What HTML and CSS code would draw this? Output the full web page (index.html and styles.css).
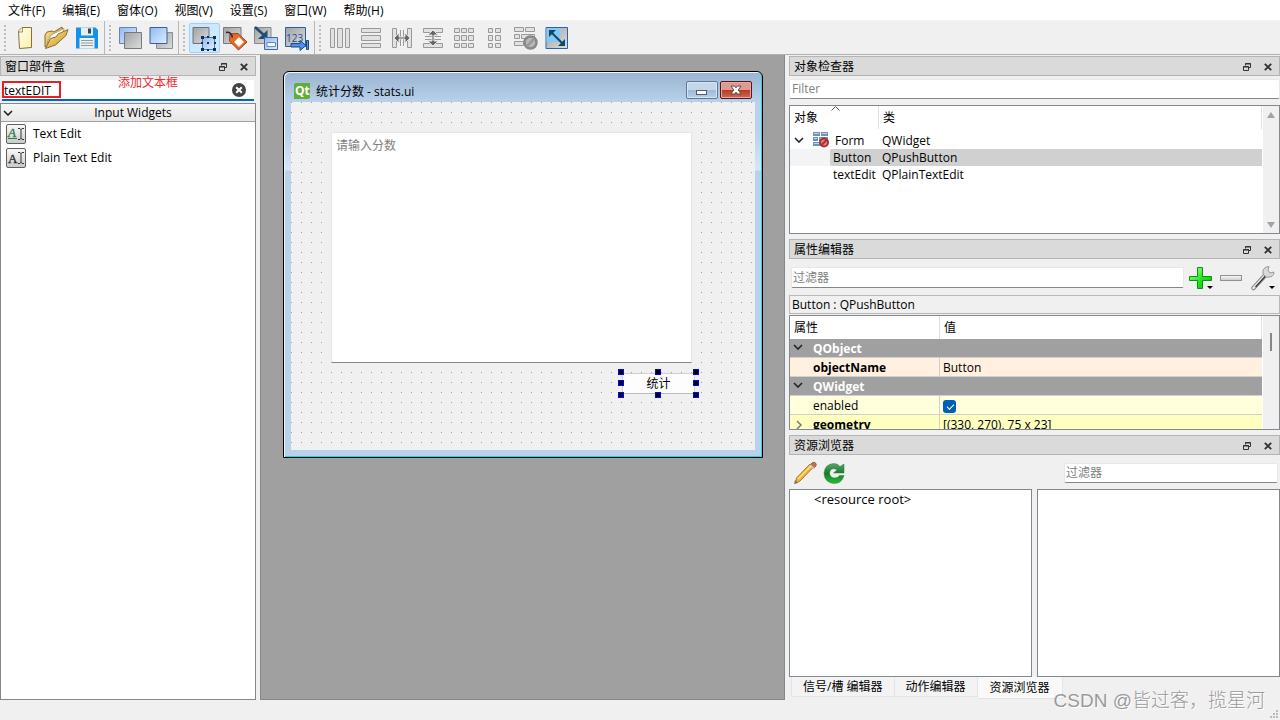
FILE: index.html
```html
<!DOCTYPE html>
<html lang="zh-CN">
<head>
<meta charset="utf-8">
<title>Qt Designer</title>
<link rel="stylesheet" href="styles.css">
</head>
<body>
<svg class="defs" aria-hidden="true">
  <defs>
    <linearGradient id="grey" x1="0" y1="0" x2="1" y2="1"><stop offset="0" stop-color="#9fa2a5"/><stop offset="1" stop-color="#dcdddd"/></linearGradient>
    <linearGradient id="blue" x1="0" y1="0" x2="1" y2="1"><stop offset="0" stop-color="#8db8f5"/><stop offset="1" stop-color="#e2eefc"/></linearGradient>
    <linearGradient id="gold" x1="0" y1="0" x2="1" y2="1"><stop offset="0" stop-color="#ffeaa0"/><stop offset="1" stop-color="#c58c1c"/></linearGradient>
    <linearGradient id="page" x1="0" y1="0" x2="1" y2="1"><stop offset="0" stop-color="#fffef0"/><stop offset="1" stop-color="#fff0a8"/></linearGradient>
    <linearGradient id="green" x1="0" y1="0" x2="0" y2="1"><stop offset="0" stop-color="#5aa569"/><stop offset=".5" stop-color="#177a2a"/><stop offset="1" stop-color="#27c22c"/></linearGradient>
    <linearGradient id="lime" x1="0" y1="0" x2="1" y2="1"><stop offset="0" stop-color="#b9ffb0"/><stop offset=".55" stop-color="#22e222"/><stop offset="1" stop-color="#06bd08"/></linearGradient>
    <linearGradient id="steel" x1="0" y1="0" x2="0" y2="1"><stop offset="0" stop-color="#fafafa"/><stop offset="1" stop-color="#c9c9c9"/></linearGradient>
    <symbol id="restore" viewBox="0 0 8 8"><path d="M2.500 2.500V.5h5v4h-2M2 1h6" fill="none" stroke="#333"/><path d="M.5 3.500h5v4h-5zM0 4h6" fill="none" stroke="#333"/></symbol>
    <symbol id="close" viewBox="0 0 8 8"><path d="M.8.8l6.400 6.400M7.200.8L.8 7.200" stroke="#333" stroke-width="1.900"/></symbol>
    <symbol id="chevron" viewBox="0 0 10 6"><path d="M1 1l4 4 4-4" fill="none" stroke="#222" stroke-width="1.600"/></symbol>
  </defs>
</svg>

<div class="app">
  <nav class="menubar">
    <button>文件(F)</button><button>编辑(E)</button><button>窗体(O)</button><button>视图(V)</button><button>设置(S)</button><button>窗口(W)</button><button>帮助(H)</button>
  </nav>

  <div class="toolbars">
    <div class="toolbar">
      <i class="grip"></i>
      <button aria-label="新建"><svg viewBox="0 0 24 24"><path d="M5.500 5L9 1.500h9.500v20l-12 1z" fill="url(#page)" stroke="#8a7138"/><path d="M5.500 6H9.500V1.500" fill="#fff6c8" stroke="#a48b50"/></svg></button>
      <button aria-label="打开"><svg viewBox="0 0 24 24"><path d="M1 21V9l2-3 5-1 2 1 8-5 1 4-5 12z" fill="url(#gold)" stroke="#8b6b2c"/><path d="M3 17l4-8L20 2.500 19 8z" fill="#fff" stroke="#9b8550" stroke-width=".7"/><path d="M1.500 22.500l5-10 5.500-1.500 2-3 10-4.500-2 6L11.500 19z" fill="url(#gold)" stroke="#92702c"/></svg></button>
      <button aria-label="保存"><svg viewBox="0 0 24 24"><path d="M1 1.500h19.500L23 4v18.500H1z" fill="#1391ee"/><path d="M6 1.500h12v8H6z" fill="#e7ecee"/><path d="M13 2.500h3v5h-3z" fill="#344854"/><path d="M4.500 12h15v10.500h-15z" fill="#eef0f0"/><path d="M6 14.500h12M6 17h12M6 19.500h12" stroke="#939a9c"/></svg></button>
    </div>
    <div class="toolbar">
      <i class="grip"></i>
      <button aria-label="置后"><svg viewBox="0 0 24 24"><path d="M1.500 1.500h17v16h-17z" fill="url(#blue)" stroke="#6c83a5"/><path d="M6.500 6.500h17v16h-17z" fill="url(#grey)" stroke="#77797c"/></svg></button>
      <button aria-label="置前"><svg viewBox="0 0 24 24"><path d="M7.500 6.500h16v16h-16z" fill="url(#grey)" stroke="#8b8d90"/><path d="M1 1.500h17v16H1z" fill="url(#blue)" stroke="#3e5f91"/></svg></button>
    </div>
    <div class="toolbar">
      <i class="grip"></i>
      <button class="on" aria-label="编辑控件"><svg viewBox="0 0 24 24"><path d="M1 1.500h16v16H1z" fill="url(#grey)" stroke="#707274"/><path d="M10.500 11.500h12v12h-12z" fill="url(#blue)" stroke="#4a77b4"/><g fill="#102d54"><path d="M9 10h3v3H9zM15 10h2v2h-2zM21 10h3v3h-3zM9 16h2v2H9zM22 16h2v2h-2zM9 22h3v3H9zM15 23h2v2h-2zM21 22h3v3h-3zM15 16h2v2h-2z"/></g></svg></button>
      <button aria-label="编辑伙伴"><svg viewBox="0 0 24 24"><path d="M.5 1.500H18v16H.5z" fill="url(#grey)" stroke="#77797b"/><path d="M7 8l8-.5 9 8.500-8.500 8L6.500 15z" fill="#e96b25" stroke="#9c3d12"/><path d="M16 11l5 5-5 5-5-5z" fill="#fff" stroke="#f8a46e"/><path d="M3 6.500q5-1 6.500 5" fill="none" stroke="#222c38" stroke-width="1.500"/></svg></button>
      <button aria-label="编辑信号/槽"><svg viewBox="0 0 24 24"><path d="M.5 1.500H17v16H.5z" fill="url(#grey)" stroke="#86888a"/><path d="M1 1l10 9" stroke="#244d75" stroke-width="2.500"/><path d="M13.500 4v9H4z" fill="#244d75"/><path d="M10.500 11.500h13v12h-13z" fill="url(#blue)" stroke="#3c6aa8"/><path d="M13 16.500h8.500v4H13z" fill="#fff" stroke="#6488bb"/></svg></button>
      <button aria-label="编辑Tab顺序"><svg viewBox="0 0 24 24"><path d="M.5 1.500h20v19H.5z" fill="url(#grey)" stroke="#2d609b"/><text x="1" y="16" class="tabnum">123</text><path d="M6 17.500h9v-3l6 5-6 5v-3.500H6z" fill="#4d91e4" stroke="#194a8a"/><path d="M21.500 14.500h2v9h-2z" fill="#5a93d8" stroke="#194a8a"/></svg></button>
    </div>
    <div class="toolbar last">
      <i class="grip"></i>
      <button aria-label="水平布局"><svg viewBox="0 0 24 24" class="lay"><path d="M2.500 2.500h4v19h-4zM9.500 2.500h5v19h-5zM17.500 2.500h4v19h-4z"/></svg></button>
      <button aria-label="垂直布局"><svg viewBox="0 0 24 24" class="lay"><path d="M2.500 2.500h19v4h-19zM2.500 9.500h19v5h-19zM2.500 17.500h19v4h-19z"/></svg></button>
      <button aria-label="使用分裂器水平布局"><svg viewBox="0 0 24 24" class="lay"><path d="M2.500 2.500h4v19h-4zM17.500 2.500h4v19h-4z"/><path d="M10.500 4v16M13.500 4v16" /><path class="dark" d="M4 12l5-5v4h6V7l5 5-5 5v-4H9v4z"/></svg></button>
      <button aria-label="使用分裂器垂直布局"><svg viewBox="0 0 24 24" class="lay"><path d="M2.500 2.500h19v4h-19zM2.500 17.500h19v4h-19z"/><path d="M4 10.500h16M4 13.500h16"/><path class="dark" d="M12 4l5 5h-4v6h4l-5 5-5-5h4V9H7z"/></svg></button>
      <button aria-label="栅格布局"><svg viewBox="0 0 24 24" class="lay"><path d="M2.500 2.500h5v4h-5zM9.500 2.500h5v4h-5zM16.500 2.500h5v4h-5zM2.500 9.500h5v5h-5zM9.500 9.500h5v5h-5zM16.500 9.500h5v5h-5zM2.500 17.500h5v4h-5zM9.500 17.500h5v4h-5zM16.500 17.500h5v4h-5z"/></svg></button>
      <button aria-label="表单布局"><svg viewBox="0 0 24 24" class="lay"><path d="M5.500 2.500h4v4h-4zM12.500 2.500h5v4h-5zM5.500 9.500h4v5h-4zM12.500 9.500h5v5h-5zM5.500 17.500h4v4h-4zM12.500 17.500h5v4h-5z"/></svg></button>
      <button aria-label="打破布局"><svg viewBox="0 0 24 24" class="lay"><path d="M.5 1.500h9v4h-9zM11.500 1.500h9v4h-9zM.5 8.500h5v4h-5zM7.500 8.500h13v4h-13zM.5 15.500h9v4h-9z"/><circle cx="16.500" cy="16.500" r="6" fill="#b8b8b8" stroke="#888" stroke-width="2.500"/><path d="M12.500 20.500l8-8" stroke="#888" stroke-width="2.500"/></svg></button>
      <button aria-label="调整大小"><svg viewBox="0 0 24 24"><path d="M1 1.500h21.500v21H1z" fill="#b9c9d2" stroke="#2864ae"/><path d="M1.500 2h14v14h-14z" fill="#86c8f5"/><path d="M16 2h6v20H2v-6h14z" fill="url(#grey)"/><path d="M5 5l14 14" stroke="#114766" stroke-width="2"/><path d="M4 4h7l-7 7zM20 20h-7l7-7z" fill="#114766"/></svg></button>
    </div>
  </div>

  <main class="workspace">
    <aside class="dock left">
      <header class="dock-title"><h2>窗口部件盒</h2><button aria-label="浮动"><svg><use href="#restore"/></svg></button><button aria-label="关闭"><svg><use href="#close"/></svg></button></header>
      <div class="search">
        <input type="text" value="textEDIT" aria-label="过滤部件">
        <button aria-label="清除"><svg viewBox="0 0 14 14"><circle cx="7" cy="7" r="7" fill="#444"/><path d="M4.200 4.200l5.600 5.600M9.800 4.200L4.200 9.800" stroke="#fff" stroke-width="2"/></svg></button>
        <span class="mark"></span><span class="note">添加文本框</span>
      </div>
      <div class="widget-box">
        <button class="category"><svg><use href="#chevron"/></svg><span>Input Widgets</span></button>
        <ul>
          <li><svg viewBox="0 0 20 20"><rect x=".5" y=".5" width="19" height="19" rx="1.500" fill="url(#steel)" stroke="#606060"/><text x="2" y="13" class="ai rich">A</text><path d="M2 14.500h9" stroke="#2d7a45"/><path d="M12 4.500h2l1 1 1-1h2M15 5v10M12 15.500h2l1-1 1 1h2" fill="none" stroke="#333"/></svg><span>Text Edit</span></li>
          <li><svg viewBox="0 0 20 20"><rect x=".5" y=".5" width="19" height="19" rx="1.500" fill="url(#steel)" stroke="#606060"/><text x="2" y="15" class="ai">A</text><path d="M12 4.500h2l1 1 1-1h2M15 5v10M12 15.500h2l1-1 1 1h2" fill="none" stroke="#333"/></svg><span>Plain Text Edit</span></li>
        </ul>
      </div>
    </aside>

    <section class="canvas">
      <div class="form-window">
        <header class="form-title">
          <svg class="qt" viewBox="0 0 16 16"><path d="M1.500 0H16v14.500L14.500 16H0V1.500z" fill="#5fae35"/><text x="1" y="12">Qt</text></svg>
          <h1>统计分数 - stats.ui</h1>
          <button class="min" aria-label="最小化"><svg viewBox="0 0 12 10"><rect x=".5" y="5.500" width="10" height="4" fill="#fff" stroke="#555d66"/></svg></button>
          <button class="shut" aria-label="关闭"><svg viewBox="0 0 12 10"><path d="M1 1h3.500L6 2.800 7.500 1H11L8.300 5 11 9H7.500L6 7.200 4.500 9H1l2.700-4z" fill="#fff" stroke="#5a4a4e"/></svg></button>
        </header>
        <div class="form">
          <textarea class="score" placeholder="请输入分数" aria-label="分数"></textarea>
          <div class="pick">
            <button>统计</button>
            <i class="n w"></i><i class="n c"></i><i class="n e"></i><i class="m w"></i><i class="m e"></i><i class="s w"></i><i class="s c"></i><i class="s e"></i>
          </div>
        </div>
      </div>
    </section>

    <aside class="dock right">
      <section class="inspector">
        <header class="dock-title"><h2>对象检查器</h2><button aria-label="浮动"><svg><use href="#restore"/></svg></button><button aria-label="关闭"><svg><use href="#close"/></svg></button></header>
        <input class="line" type="text" placeholder="Filter" aria-label="Filter">
        <div class="view tree">
          <table>
            <thead><tr><th>对象<svg class="sort" viewBox="0 0 9 5"><path d="M.5 4.500l4-4 4 4" fill="none" stroke="#555"/></svg></th><th>类</th></tr></thead>
            <tbody>
              <tr class="root"><td><span class="node"><svg class="arrow"><use href="#chevron"/></svg><svg class="kind" viewBox="0 0 16 16"><path d="M0 0h7v4H0zM8 0h7v4H8zM0 5h5v4H0zM6 5h9v4H6zM0 10h7v4H0z" fill="#6f94b4"/><path d="M1 1h5v1H1zM9 1h5v1H9zM1 6h3v1H1zM7 6h7v1H7zM1 11h5v1H1z" fill="#b5d8f2"/><circle cx="11" cy="10.500" r="4" fill="#d98a8a" stroke="#ad2d32" stroke-width="2"/><path d="M8.500 13l5-5" stroke="#ad2d32" stroke-width="2"/></svg>Form</span></td><td>QWidget</td></tr>
              <tr class="sel"><td><span class="leaf">Button</span></td><td>QPushButton</td></tr>
              <tr><td><span class="leaf">textEdit</span></td><td>QPlainTextEdit</td></tr>
            </tbody>
          </table>
          <div class="scroll"><i class="up"></i><i class="down"></i></div>
        </div>
      </section>

      <section class="properties">
        <header class="dock-title"><h2>属性编辑器</h2><button aria-label="浮动"><svg><use href="#restore"/></svg></button><button aria-label="关闭"><svg><use href="#close"/></svg></button></header>
        <div class="tools">
          <input class="line" type="text" placeholder="过滤器" aria-label="过滤属性">
          <button aria-label="添加动态属性"><svg viewBox="0 0 26 26"><path d="M8.500 2.500h5v9h9v4h-9v8h-5v-8h-8v-4h8z" fill="url(#lime)" stroke="#0b930f"/><path d="M18 21h6l-3 3z" fill="#000"/></svg></button>
          <button aria-label="删除动态属性"><svg viewBox="0 0 26 26"><rect x=".5" y="10.500" width="21" height="5" fill="url(#steel)" stroke="#929292"/></svg></button>
          <button aria-label="配置"><svg viewBox="0 0 26 26"><path d="M2.500 23L14 10.500" stroke="#8a8a8a" stroke-width="4.500" stroke-linecap="round"/><path d="M2.500 23L14 10.500" stroke="#e9e9e9" stroke-width="2.500" stroke-linecap="round"/><path d="M4.500 22L15 10.500" stroke="#333" stroke-width="1.200"/><path d="M12 9q-1-7 6-7.500l-1 3.500 2 3 4-1q0 6-8 5z" fill="#d8d8d8" stroke="#999"/><path d="M18 21h6l-3 3z" fill="#000"/></svg></button>
        </div>
        <p class="target">Button : QPushButton</p>
        <div class="view props">
          <table>
            <thead><tr><th>属性</th><th>值</th></tr></thead>
            <tbody>
              <tr class="group"><td colspan="2"><svg><use href="#chevron"/></svg>QObject</td></tr>
              <tr class="peach"><td><b>objectName</b></td><td>Button</td></tr>
              <tr class="group"><td colspan="2"><svg><use href="#chevron"/></svg>QWidget</td></tr>
              <tr class="pale"><td><label for="enabled">enabled</label></td><td><input type="checkbox" id="enabled" checked></td></tr>
              <tr class="yellow"><td><svg class="closed" viewBox="0 0 6 10"><path d="M1 1l4 4-4 4" fill="none" stroke="#777" stroke-width="1.500"/></svg><b>geometry</b></td><td>[(330, 270), 75 x 23]</td></tr>
            </tbody>
          </table>
          <div class="scroll"><i class="thumb"></i></div>
        </div>
      </section>

      <section class="resources">
        <header class="dock-title"><h2>资源浏览器</h2><button aria-label="浮动"><svg><use href="#restore"/></svg></button><button aria-label="关闭"><svg><use href="#close"/></svg></button></header>
        <div class="tools">
          <button aria-label="编辑资源"><svg viewBox="0 0 24 24"><path d="M2.500 22.500l1-5.500L17 3l3.500 3L7 20z" fill="#f3b23c" stroke="#b5771e"/><path d="M5 18L18 5" stroke="#ffe08b" stroke-width="1.500"/><path d="M17 4l2-2q2-1.500 3.500 0t0 3.500L20.500 7z" fill="#c56d55" stroke="#9b5c4a"/><path d="M17 4l3.500 3" stroke="#ccd3d8" stroke-width="1.500"/><path d="M1 23l1-4 3 2.500z" fill="#807668"/></svg></button>
          <button aria-label="重新加载"><svg viewBox="0 0 24 24"><path d="M18 5.500L22 3v9H11.500l3.800-3.300Q8.500 5.500 7.500 12q.5 5 5.500 5 3.500-.3 4.500-2.500H22Q20 22.500 12 22.500 2.500 21.500 2 12.500 2.500 3 12 2.500q4 .2 6 3z" fill="url(#green)" stroke="#27813a" stroke-width=".5"/></svg></button>
          <input class="line" type="text" placeholder="过滤器" aria-label="过滤资源">
        </div>
        <div class="panes"><div class="view root-list"><p>&lt;resource root&gt;</p></div><div class="view"></div></div>
      </section>
      <nav class="tabs"><button>信号/槽 编辑器</button><button>动作编辑器</button><button class="active">资源浏览器</button></nav>
    </aside>
  </main>
  <footer class="status"></footer>
  <span class="watermark">CSDN @皆过客，揽星河</span>
  <svg class="sizer" viewBox="0 0 10 10"><path d="M6 0h2v2H6zM3 3h2v2H3zM6 3h2v2H6zM0 6h2v2H0zM3 6h2v2H3zM6 6h2v2H6z" fill="#bbb"/></svg>
</div>
</body>
</html>
```
FILE: styles.css
```css
* { box-sizing: border-box; }
body, h1, h2, p, ul { margin: 0; padding: 0; }
body, button, input, textarea {
  font-family: "Open Sans", "Noto Sans CJK SC", sans-serif;
  font-size: 12px;
  line-height: 16px;
  color: #000;
}
body { background: #f0f0f0; }
h1, h2 { font-size: 12px; font-weight: normal; }
button { border: 0; padding: 0; background: none; white-space: nowrap; }
input, textarea { border: 0; padding: 0; outline: 0; border-radius: 0; min-width: 0; }
svg { display: block; flex: none; }
ul { list-style: none; }
::placeholder { color: #808080; opacity: 1; }
.defs { position: absolute; width: 0; height: 0; }

.app { position: relative; display: flex; flex-direction: column; height: 100vh; overflow: hidden; }

.menubar { display: flex; gap: 17px; height: 21px; padding: 2px 8px 0; background: #fff; border-bottom: 1px solid #f4f4f4; }

.toolbars { display: flex; height: 34px; border-bottom: 1px solid #b0b0b0; flex: none; }
.toolbar { display: flex; padding: 2px 1px 1px 0; border-right: 1px solid #b8b8b8; }
.toolbar.last { border-right: 0; }
.grip { width: 10px; margin: 2px 0; background: repeating-linear-gradient(#bdbdbd 0 2px, transparent 2px 4px) 4px 0 / 2px 26px no-repeat; }
.toolbar button { display: grid; place-items: center; width: 31px; height: 30px; padding-right: 1px; }
.toolbar button svg { width: 24px; height: 24px; overflow: visible; }
.toolbar .on { background: #cce8ff; border: 1px solid #99d1ff; border-radius: 2px; }
.tabnum { font: 10px "Open Sans", sans-serif; fill: #1c4f8d; }
.lay path { fill: #e2e2e2; stroke: #999; }
.lay .dark { fill: #666; stroke: #e0e0e0; }

.workspace { flex: 1; min-height: 0; display: flex; gap: 4px; }
.dock { display: flex; flex-direction: column; flex: none; padding-top: 1px; }
.left { width: 256px; }
.right { width: 491px; }
.dock-title { display: flex; align-items: center; height: 20px; flex: none; padding: 2px 4px 0; background: #dadada; border: 1px solid #b4b4b4; }
.dock-title h2 { flex: 1; }
.dock-title button { width: 14px; height: 14px; margin-left: 7px; display: grid; place-items: center; }
.dock-title svg { width: 8px; height: 8px; }

.search { position: relative; display: flex; align-items: center; height: 21px; margin: 4px 2px 2px; padding: 0 8px 0 2px; background: #fff; border-bottom: 2px solid #0067c0; flex: none; }
.search input { flex: 1; padding-top: 2px; background: none; }
.search svg { width: 14px; height: 14px; }
.mark { position: absolute; left: 0; top: 1px; width: 59px; height: 17px; border: 2px solid #e81e25; }
.note { position: absolute; left: 116px; top: -5px; color: #ee2a31; }
.widget-box { flex: 1; border: 1px solid #828790; background: #fff; }
.category { display: flex; align-items: center; width: 100%; height: 18px; padding: 1px 2px 0; background: linear-gradient(#f6f6f6, #e6e6e6); border-bottom: 1px solid #a0a0a0; }
.category svg { width: 10px; height: 6px; }
.category span { flex: 1; text-align: center; }
.widget-box li { display: flex; align-items: center; gap: 7px; height: 24px; padding-left: 5px; }
.widget-box li svg { width: 20px; height: 20px; }
.ai { font: 13px "Liberation Serif", serif; fill: #222; stroke: #222; stroke-width: .3px; }
.ai.rich { font-style: italic; fill: #2d7a45; stroke: #2d7a45; }

.canvas { position: relative; flex: 1; min-width: 0; background: #a0a0a0; border: 1px solid #828790; border-top: 0; }
.form-window { position: absolute; left: 22px; top: 16px; width: 480px; height: 387px; display: flex; flex-direction: column; padding: 1px 7px 7px; background: linear-gradient(#99b4d1, #b9d1ea 30px, #b9d1ea 60px, #d7e6f5 98px, #b9d1ea 99px); border: 1px solid #000; border-radius: 6px 6px 0 0; box-shadow: inset 1px 1px #eef6fd, inset -1px -1px #2ad0e8; }
.form-title { display: flex; height: 29px; padding: 0 3px; gap: 6px; align-items: flex-start; flex: none; }
.qt { width: 16px; height: 16px; margin-top: 10px; }
.qt text { font: bold 12px "Open Sans", sans-serif; fill: #fff; }
.form-title h1 { flex: 1; margin-top: 11px; }
.form-title button { display: grid; place-items: center; width: 32px; height: 18px; margin-top: 8px; border: 1px solid #5f7894; border-radius: 2px; background: linear-gradient(#c4d7ea 50%, #9fbad7 50%, #b7cee6); box-shadow: inset 0 0 0 1px #d7e5f2; }
.form-title .min { margin-right: -4px; }
.form-title .shut { border-color: #56141c; background: linear-gradient(#e09a8c 48%, #b43a22 50%, #d06a58); box-shadow: inset 0 0 0 1px #e8a99e; }
.form-title button svg { width: 12px; height: 10px; }
.form { position: relative; flex: 1; background: conic-gradient(from 270deg at 1px 1px, #a0a0a0 90deg, transparent 0) 0 0 / 10px 10px #f0f0f0; }
.score { position: absolute; left: 40px; top: 30px; width: 361px; height: 231px; padding: 5px 4px; background: #fff; border: 1px solid #e5e5e5; border-bottom-color: #868686; resize: none; }
.pick { position: absolute; left: 330px; top: 270px; width: 75px; height: 23px; }
.pick button { width: 73px; height: 21px; margin: 1px; padding-top: 1px; background: #fdfdfd; border: 1px solid #d0d0d0; border-bottom-color: #bbb; display: block; }
.pick i { position: absolute; width: 6px; height: 6px; background: #000; border: 1px solid #00f; }
.n { top: -3px; } .m { top: 8px; } .s { bottom: -3px; }
.w { left: -3px; } .c { left: 34px; } .e { right: -3px; }

.line { display: block; height: 20px; padding: 0 1px; background: #fff; border: 1px solid #e8e8e8; border-bottom-color: #868686; border-radius: 2px; }
.view { background: #fff; border: 1px solid #828790; overflow: hidden; }
.inspector > .line { width: 100%; margin: 3px 0 6px; padding: 0 2px 1px; }
.inspector .view { height: 129px; }
.tree, .props { display: flex; }
table { flex: 1; border-collapse: separate; border-spacing: 0; table-layout: fixed; width: 100%; }
th, td { padding: 0; text-align: left; font-weight: normal; white-space: nowrap; }
th { height: 23px; padding-left: 4px; border-right: 1px solid #e0e0e0; position: relative; }
.tree th:first-child { width: 89px; }
.tree { align-items: flex-start; }
.sort { position: absolute; left: 41px; top: 0; width: 9px; height: 5px; }
.tree td { height: 17px; line-height: 17px; }
.tree .root td { height: 20px; padding-top: 2px; }
.tree td + td { padding-left: 3px; }
.node { display: flex; align-items: center; padding-left: 4px; }
.arrow { width: 10px; height: 6px; margin-right: 9px; }
.kind { width: 16px; height: 16px; margin-right: 6px; }
.leaf { display: block; margin-left: 40px; padding-left: 3px; }
.sel td:first-child { background: #f4f4f4; }
.sel .leaf, .sel td + td { background: #d0d0d0; }
.sel .leaf { border-radius: 2px 0 0 2px; }
.scroll { align-self: stretch; width: 16px; margin-left: 1px; flex: none; background: #f0f0f0; display: flex; flex-direction: column; align-items: center; justify-content: space-between; padding: 6px 0 5px; }
.up, .down { border: 4px solid transparent; border-top: 0; border-bottom: 6px solid #a3a3a3; }
.down { transform: rotate(180deg); }
.thumb { width: 2px; height: 18px; margin-top: 11px; background: #868686; }

.properties { padding-top: 5px; }
.tools { display: flex; align-items: center; }
.properties .tools { height: 36px; padding: 1px 3px 0 2px; gap: 5px; }
.properties .line { flex: 1; height: 21px; }
.properties .tools button { width: 26px; height: 26px; }
.properties .tools svg { width: 26px; height: 26px; }
.target { height: 19px; padding: 1px 2px 0; border: 1px solid #b8b8b8; margin-bottom: 1px; }
.props { height: 115px; align-items: flex-start; }
.props th:first-child { width: 150px; }
.props td { height: 19px; line-height: 16px; padding: 2px 0 0 23px; border-bottom: 1px solid #d0d0d0; border-right: 1px solid #d0d0d0; }
.props td + td { padding-left: 3px; border-right: 0; }
.props td svg { float: left; width: 10px; height: 6px; margin: 3px 9px 0 -20px; }
.props td .closed { width: 6px; height: 10px; margin: 3px 11px 0 -17px; }
.props .group td { background: #a0a0a0; color: #fff; font-weight: bold; border-right: 0; }
.peach { background: #fff0df; }
.pale { background: #ffffdc; }
.yellow { background: #ffffbf; }
.props input { display: block; appearance: none; width: 13px; height: 13px; margin: 0; border-radius: 3px; background: #005fb8; }
.props input:checked::after { content: ""; display: block; width: 6px; height: 3px; margin: 4px 0 0 4px; border: solid #fff; border-width: 0 0 1px 1px; transform: rotate(-45deg); }

.resources { flex: 1; display: flex; flex-direction: column; padding-top: 5px; min-height: 0; }
.resources .tools { height: 34px; padding: 1px 2px 0 4px; gap: 5px; }
.resources .tools svg { width: 24px; height: 24px; }
.resources .line { width: 214px; margin-left: auto; }
.panes { flex: 1; display: grid; grid-template-columns: 243px 1fr; gap: 5px; }
.root-list p { padding: 1px 0 0 24px; font-size: 13px; }
.tabs { display: flex; height: 23px; padding-left: 2px; align-items: flex-start; flex: none; }
.tabs button { height: 20px; padding: 1px 11px 0; border: 1px solid #e4e4e4; border-top: 0; background: #f3f3f3; }
.tabs button + button { border-left: 0; }
.tabs .active { height: 22px; padding: 1px 12px 0; background: #f9f9f9; }

.status { height: 20px; flex: none; }
.watermark { position: absolute; right: 15px; bottom: 6px; font-size: 19px; line-height: 26px; color: #9a9a9a; font-family: "Liberation Sans", "Noto Sans CJK SC", sans-serif; font-weight: 300; text-shadow: 1px 1px #fff; }
.sizer { position: absolute; right: 0; bottom: 0; width: 10px; height: 10px; }
```
